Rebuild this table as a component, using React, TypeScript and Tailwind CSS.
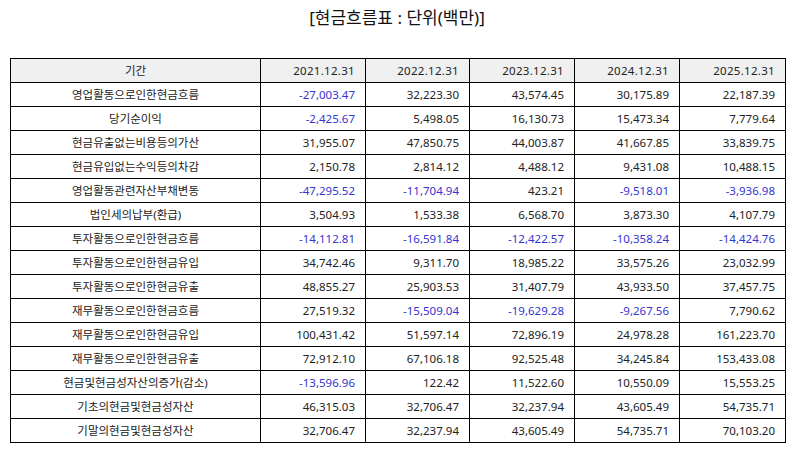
const headers = ["2021.12.31", "2022.12.31", "2023.12.31", "2024.12.31", "2025.12.31"];

const rows: [string, string[]][] = [
  ["영업활동으로인한현금흐름", ["-27,003.47", "32,223.30", "43,574.45", "30,175.89", "22,187.39"]],
  ["당기순이익", ["-2,425.67", "5,498.05", "16,130.73", "15,473.34", "7,779.64"]],
  ["현금유출없는비용등의가산", ["31,955.07", "47,850.75", "44,003.87", "41,667.85", "33,839.75"]],
  ["현금유입없는수익등의차감", ["2,150.78", "2,814.12", "4,488.12", "9,431.08", "10,488.15"]],
  ["영업활동관련자산부채변동", ["-47,295.52", "-11,704.94", "423.21", "-9,518.01", "-3,936.98"]],
  ["법인세의납부(환급)", ["3,504.93", "1,533.38", "6,568.70", "3,873.30", "4,107.79"]],
  ["투자활동으로인한현금흐름", ["-14,112.81", "-16,591.84", "-12,422.57", "-10,358.24", "-14,424.76"]],
  ["투자활동으로인한현금유입", ["34,742.46", "9,311.70", "18,985.22", "33,575.26", "23,032.99"]],
  ["투자활동으로인한현금유출", ["48,855.27", "25,903.53", "31,407.79", "43,933.50", "37,457.75"]],
  ["재무활동으로인한현금흐름", ["27,519.32", "-15,509.04", "-19,629.28", "-9,267.56", "7,790.62"]],
  ["재무활동으로인한현금유입", ["100,431.42", "51,597.14", "72,896.19", "24,978.28", "161,223.70"]],
  ["재무활동으로인한현금유출", ["72,912.10", "67,106.18", "92,525.48", "34,245.84", "153,433.08"]],
  ["현금및현금성자산의증가(감소)", ["-13,596.96", "122.42", "11,522.60", "10,550.09", "15,553.25"]],
  ["기초의현금및현금성자산", ["46,315.03", "32,706.47", "32,237.94", "43,605.49", "54,735.71"]],
  ["기말의현금및현금성자산", ["32,706.47", "32,237.94", "43,605.49", "54,735.71", "70,103.20"]],
];

export default function App() {
  return (
    <div className="w-[794px] h-[452px] bg-white text-[#222] font-['Noto_Sans','Noto_Sans_CJK_KR',sans-serif]">
      <div className="h-[58px] pt-[5px] text-center text-[17px] leading-[26px] text-[#111]">
        [현금흐름표 : 단위(백만)]
      </div>
      <table className="ml-[10px] w-[775px] table-fixed border-collapse text-[11.5px] leading-none">
        <colgroup>
          <col className="w-[250px]" />
          <col className="w-[105px]" />
          <col className="w-[104px]" />
          <col className="w-[105px]" />
          <col className="w-[105px]" />
          <col className="w-[106px]" />
        </colgroup>
        <thead>
          <tr className="bg-[#f0f0f0]">
            <th className="h-[24px] border border-black p-0 text-center font-normal">기간</th>
            {headers.map((h) => (
              <th key={h} className="h-[24px] border border-black p-0 pr-[10px] text-right font-normal tracking-[0.3px]">
                {h}
              </th>
            ))}
          </tr>
        </thead>
        <tbody>
          {rows.map(([label, values]) => (
            <tr key={label}>
              <td className="h-[24px] border border-black p-0 text-center">{label}</td>
              {values.map((v, i) => (
                <td
                  key={i}
                  className={`h-[24px] border border-black p-0 pr-[10px] text-right ${
                    v.startsWith("-") ? "text-[#3535d0]" : ""
                  }`}
                >
                  {v}
                </td>
              ))}
            </tr>
          ))}
        </tbody>
      </table>
    </div>
  );
}
